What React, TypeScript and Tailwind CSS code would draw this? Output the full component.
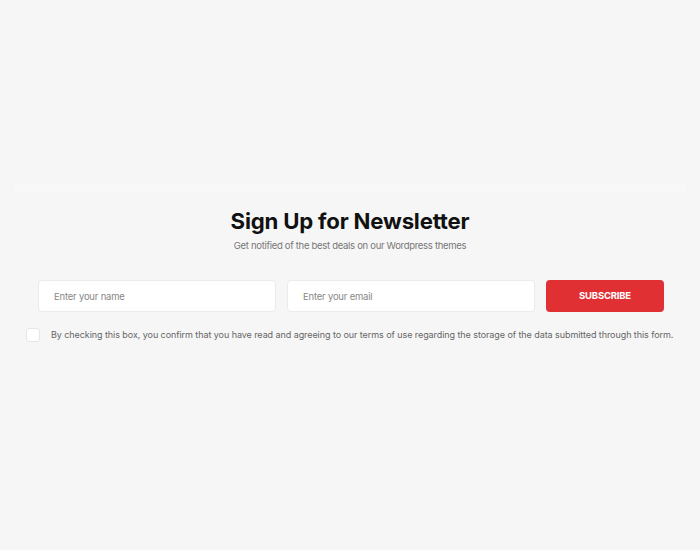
export default function App() {
  return (
    <div className="min-h-[550px] w-full bg-[#f6f6f6] font-['Inter',sans-serif] flex flex-col">
      <div className="h-[184px]" />
      <div className="mx-[15px] h-[8px] bg-[#f8f8f8]" />
      <div className="flex flex-col items-center pt-[14px]">
        <h2 className="text-[22.2px] leading-[30px] font-bold text-[#111] tracking-[-0.2px]">Sign Up for Newsletter</h2>
        <p className="mt-[3px] text-[9.5px] leading-[14px] tracking-[-0.3px] text-[#777]">Get notified of the best deals on our Wordpress themes</p>
      </div>
      <div className="mt-[27px] flex flex-col">
        <div className="ml-[38px] w-[626px] flex gap-[11px]">
          <input
            className="w-[238px] h-[32px] rounded-[4px] bg-white border border-[#ebebeb] px-[15px] text-[9.5px] tracking-[-0.2px] text-[#333] placeholder:text-[#888] outline-none"
            placeholder="Enter your name"
          />
          <input
            className="flex-1 h-[32px] rounded-[4px] bg-white border border-[#ebebeb] px-[15px] text-[9.5px] tracking-[-0.2px] text-[#333] placeholder:text-[#888] outline-none"
            placeholder="Enter your email"
          />
          <button className="w-[118px] h-[32px] rounded-[4px] bg-[#e03034] text-white text-[9.5px] font-bold uppercase tracking-[-0.2px]">
            Subscribe
          </button>
        </div>
        <label className="ml-[26px] mt-[16px] flex items-center gap-[11px]">
          <span className="w-[14px] h-[14px] rounded-[3px] bg-white border border-[#e6e6e6] shrink-0" />
          <span className="text-[9px] leading-[14px] tracking-[-0.07px] text-[#666] whitespace-nowrap">
            By checking this box, you confirm that you have read and agreeing to our terms of use regarding the storage of the data submitted through this form.
          </span>
        </label>
      </div>
    </div>
  )
}
